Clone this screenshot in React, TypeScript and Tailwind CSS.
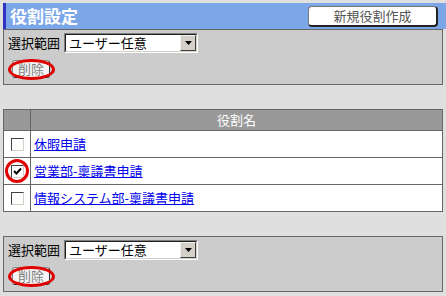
import React from "react";

const font = { fontFamily: '"Noto Sans CJK JP", "Noto Sans", sans-serif' };

function SelectBox() {
  return (
    <div className="flex h-[20px] w-[134px] border border-t-[#808080] border-l-[#808080] border-b-white border-r-white bg-white">
      <div className="flex flex-1 border border-t-[#202020] border-l-[#202020] border-b-[#d4d0c8] border-r-[#d4d0c8]">
        <div className="flex-1 pl-[3px] text-[13px] leading-[16px] text-black">ユーザー任意</div>
        <div className="flex w-[16px] items-center justify-center border border-t-[#f0f0f0] border-l-[#f0f0f0] border-b-[#404040] border-r-[#404040] bg-[#d4d0c8]">
          <svg width="7" height="4" viewBox="0 0 7 4">
            <polygon points="0,0 7,0 3.5,4" fill="#000" />
          </svg>
        </div>
      </div>
    </div>
  );
}

function DeleteButton() {
  return (
    <div className="relative ml-[4px] mt-[7px] h-[18px] w-[38px]">
      <div className="flex h-[18px] w-[38px] items-center justify-center rounded-[3px] border border-[#888] border-b-[#333] border-r-[#333] bg-[#f4f4f4] text-[13px] leading-[14px] text-[#808080]">
        削除
      </div>
      <div className="pointer-events-none absolute left-[-4px] top-[-1px] h-[21px] w-[47px] rounded-[50%] border-[3px] border-[#e00000]" />
    </div>
  );
}

function Panel() {
  return (
    <div className="h-[56px] w-[440px] border border-[#666] bg-[#cccccc] pl-[4px] pt-[3px]">
      <div className="flex items-center">
        <span className="w-[56px] text-[13px] leading-[20px] text-black">選択範囲</span>
        <SelectBox />
      </div>
      <DeleteButton />
    </div>
  );
}

function CheckBox({ checked }: { checked?: boolean }) {
  return (
    <div className="relative h-[13px] w-[13px] border border-t-[#404040] border-l-[#404040] border-b-[#d4d0c8] border-r-[#d4d0c8] bg-white">
      {checked && (
        <svg className="absolute left-[1px] top-[1px]" width="9" height="9" viewBox="0 0 9 9">
          <path d="M1 4 L3.5 6.5 L8 1.5" stroke="#000" strokeWidth="2" fill="none" />
        </svg>
      )}
    </div>
  );
}

const rows = [
  { name: "休暇申請", checked: false },
  { name: "営業部-稟議書申請", checked: true },
  { name: "情報システム部-稟議書申請", checked: false },
];

export default function App() {
  return (
    <div className="min-h-[296px] w-[446px] bg-[#e0dfdf] pl-[3px] pt-[3px]" style={font}>
      <div className="flex h-[26px] w-[443px] items-center justify-between border-l-[3px] border-[#3232c0] bg-[#7ba7e8]">
        <span className="pl-[4px] text-[17px] font-bold leading-[20px] text-white">役割設定</span>
        <div className="mr-[8px] flex h-[21px] w-[130px] items-center justify-center rounded-[4px] border border-[#777] border-b-[2px] border-r-[2px] border-b-[#222] border-r-[#222] bg-white text-[13px] leading-[14px] text-[#555]">
          新規役割作成
        </div>
      </div>
      <Panel />
      <div className="mt-[24px] w-[440px] border border-[#666] bg-white">
        <div className="flex h-[20px] bg-[#999999]">
          <div className="w-[27px] border-r border-[#666]" />
          <div className="flex flex-1 items-center justify-center text-[13px] leading-[14px] text-white">役割名</div>
        </div>
        {rows.map((r) => (
          <div key={r.name} className="flex h-[27px] border-t border-[#666]">
            <div className="relative flex w-[27px] items-center justify-center border-r border-[#666]">
              <CheckBox checked={r.checked} />
              {r.checked && (
                <div className="pointer-events-none absolute left-[1px] top-[1px] h-[24px] w-[24px] rounded-full border-[3px] border-[#e00000]" />
              )}
            </div>
            <div className="flex items-center pl-[3px]">
              <a href="#" className="text-[13px] leading-[14px] text-[#0000ee] underline">
                {r.name}
              </a>
            </div>
          </div>
        ))}
      </div>
      <div className="mt-[24px]">
        <Panel />
      </div>
    </div>
  );
}
